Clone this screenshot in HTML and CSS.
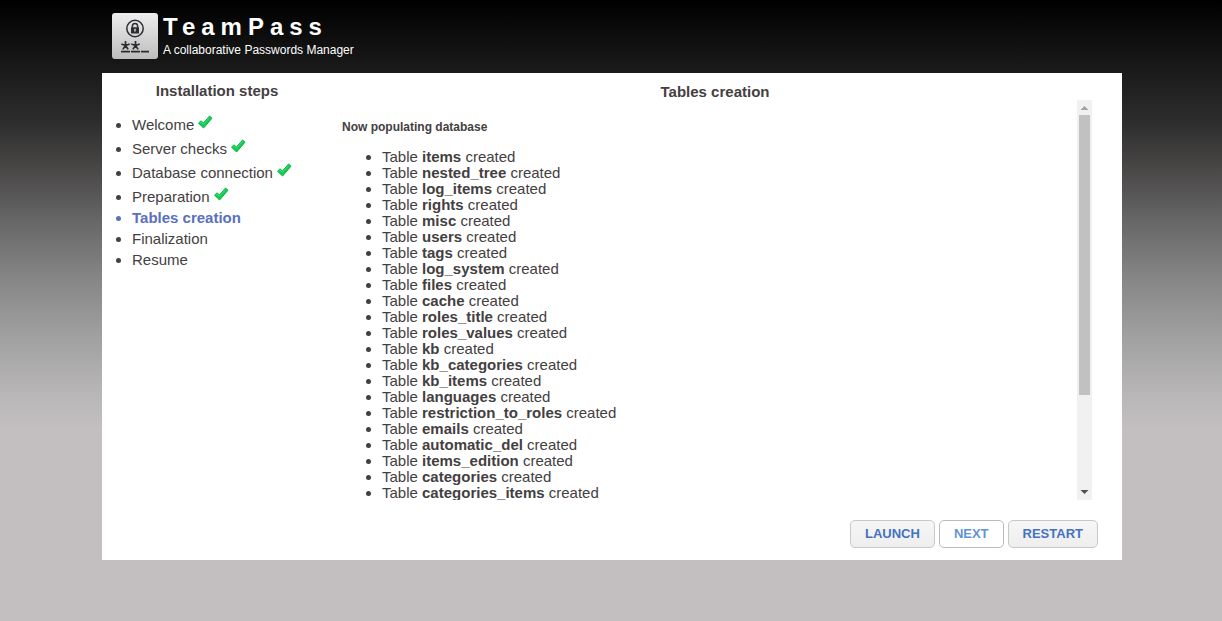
FILE: index.html
```html
<!DOCTYPE html>
<html lang="en">
<head>
    <meta charset="UTF-8">
    <meta name="viewport" content="width=device-width, initial-scale=1.0">
    <title>TeamPass Installation</title>
    <link rel="stylesheet" href="styles.css">
</head>
<body>
    <svg width="0" height="0" class="sprite">
        <symbol id="tick" viewBox="1 -1 16 16">
            <path d="M1.5 8.2L4 5.8L6.4 8L12.6 1L15 3.2L6.6 13Z" fill="#0fcb50" stroke="#0ab548" stroke-width="1" stroke-linejoin="round"/>
            <path d="M2.8 8L4 7L6.3 9.4L12.6 2.6" fill="none" stroke="#3fe07a" stroke-width="1"/>
        </symbol>
    </svg>
    <header class="top">
        <svg class="logo" viewBox="0 0 46 46">
            <defs>
                <linearGradient id="logoBg" x1="0" y1="0" x2="0" y2="1">
                    <stop offset="0" stop-color="#eeeeee"/>
                    <stop offset="1" stop-color="#bdbdbd"/>
                </linearGradient>
            </defs>
            <rect width="46" height="46" rx="3" fill="url(#logoBg)"/>
            <circle cx="23" cy="15.5" r="8.2" fill="none" stroke="#2e2c31" stroke-width="1.5"/>
            <path d="M20.4 14.5V13a2.6 2.6 0 0 1 5.2 0v1.5" fill="none" stroke="#2e2c31" stroke-width="1.5"/>
            <path d="M19 14.2h8v6.3h-8z" fill="#2e2c31"/>
            <path d="M23 15.8v2.8" stroke="#dddddd" stroke-width="1.4"/>
            <path d="M13.5 32.5V28M13.5 32.5L9.3 31M13.5 32.5L17.7 31M13.5 32.5L10.9 36.4M13.5 32.5L16.1 36.4" stroke="#2e2c31" stroke-width="1.7"/>
            <path d="M23.5 32.5V28M23.5 32.5L19.3 31M23.5 32.5L27.7 31M23.5 32.5L20.9 36.4M23.5 32.5L26.1 36.4" stroke="#2e2c31" stroke-width="1.7"/>
            <path d="M9 38.6h9M19 38.6h9M29 38.6h8" stroke="#2e2c31" stroke-width="1.6"/>
        </svg>
        <div class="brand">
            <div class="brand-name">TeamPass</div>
            <div class="brand-text">A collaborative Passwords Manager</div>
        </div>
    </header>
    <main class="box">
        <nav class="menu">
            <h3>Installation steps</h3>
            <ul>
                <li class="done">Welcome <svg class="tick"><use href="#tick"/></svg></li>
                <li class="done">Server checks <svg class="tick"><use href="#tick"/></svg></li>
                <li class="done">Database connection <svg class="tick"><use href="#tick"/></svg></li>
                <li class="done">Preparation <svg class="tick"><use href="#tick"/></svg></li>
                <li class="current">Tables creation</li>
                <li>Finalization</li>
                <li>Resume</li>
            </ul>
        </nav>
        <section class="step">
            <h3>Tables creation</h3>
            <div class="step-scroll">
                <div class="step-content">
                    <h4>Now populating database</h4>
                    <ul>
                        <li>Table <b>items</b> created</li>
                        <li>Table <b>nested_tree</b> created</li>
                        <li>Table <b>log_items</b> created</li>
                        <li>Table <b>rights</b> created</li>
                        <li>Table <b>misc</b> created</li>
                        <li>Table <b>users</b> created</li>
                        <li>Table <b>tags</b> created</li>
                        <li>Table <b>log_system</b> created</li>
                        <li>Table <b>files</b> created</li>
                        <li>Table <b>cache</b> created</li>
                        <li>Table <b>roles_title</b> created</li>
                        <li>Table <b>roles_values</b> created</li>
                        <li>Table <b>kb</b> created</li>
                        <li>Table <b>kb_categories</b> created</li>
                        <li>Table <b>kb_items</b> created</li>
                        <li>Table <b>languages</b> created</li>
                        <li>Table <b>restriction_to_roles</b> created</li>
                        <li>Table <b>emails</b> created</li>
                        <li>Table <b>automatic_del</b> created</li>
                        <li>Table <b>items_edition</b> created</li>
                        <li>Table <b>categories</b> created</li>
                        <li>Table <b>categories_items</b> created</li>
                    </ul>
                </div>
                <div class="scrollbar">
                    <svg class="arrow arrow-up" viewBox="0 0 15 15"><path d="M3.5 10L7.5 6L11.5 10Z"/></svg>
                    <div class="track">
                        <div class="thumb"></div>
                    </div>
                    <svg class="arrow" viewBox="0 0 15 15"><path d="M3.5 5L7.5 9L11.5 5Z"/></svg>
                </div>
            </div>
            <div class="buttons">
                <button type="button">LAUNCH</button>
                <button type="button" class="next">NEXT</button>
                <button type="button">RESTART</button>
            </div>
        </section>
    </main>
</body>
</html>
```

FILE: styles.css
```css
body {
    margin: 0;
    padding: 0 100px 0 102px;
    font-family: "Liberation Sans", Arial, sans-serif;
    font-size: 15px;
    color: #444041;
    background: #c3bfc0 linear-gradient(#000 0, #1b1b1b 73px, #2c2c2c 119px, #434040 158px, #656565 218px, #868585 277px, #a1a0a0 336px, #b9b7b8 396px, #c3bfc0 430px) no-repeat;
}
h3 {
    margin: 0;
    font-size: 15px;
    line-height: 17px;
    text-align: center;
}
ul {
    margin: 0;
}
.sprite {
    position: absolute;
}

.top {
    display: flex;
    gap: 5px;
    height: 60px;
    padding: 13px 10px 0;
    color: #fff;
}
.logo {
    width: 46px;
    height: 46px;
}
.brand-name {
    font-size: 24px;
    line-height: 28px;
    font-weight: bold;
    letter-spacing: 6px;
}
.brand-text {
    font-size: 12px;
    line-height: 18px;
}

.box {
    display: flex;
    background-color: #fff;
}
.menu {
    width: 230px;
    padding-top: 9px;
}
.menu ul {
    padding: 12px 0 0 30px;
    line-height: 21px;
}
.menu .done {
    padding-top: 3px;
    height: 21px;
}
.menu .current {
    color: #5a70bd;
    font-weight: bold;
}
.tick {
    width: 16px;
    height: 16px;
}

.step {
    flex: 1;
    padding: 10px 24px 12px 0;
}
.step-scroll {
    display: flex;
    height: 400px;
    padding: 0 6px 0 10px;
}
.step-content {
    flex: 1;
    overflow-y: auto;
    scrollbar-width: none;
}
.step-content h4 {
    margin: 0;
    padding: 20px 0 15px;
    font-size: 12px;
    line-height: 14px;
}
.step-content ul {
    line-height: 16px;
}

.scrollbar {
    display: flex;
    flex-direction: column;
    width: 15px;
    background-color: #f1f1f1;
}
.arrow {
    height: 15px;
    fill: #505050;
}
.arrow-up {
    fill: #a3a3a3;
}
.track {
    flex: 1;
    padding: 0 2px;
}
.thumb {
    height: 280px;
    background-color: #c1c1c1;
}

.buttons {
    display: flex;
    justify-content: flex-end;
    gap: 4px;
    padding-top: 20px;
}
button {
    height: 28px;
    padding: 0 14px 2px;
    border: 1px solid #c8c8c8;
    border-radius: 5px;
    background: linear-gradient(#f6f6f6, #eeeeee);
    color: #4472c0;
    font-family: inherit;
    font-size: 13px;
    font-weight: bold;
    cursor: pointer;
}
button.next {
    background: #fff;
    border-color: #bbb;
    color: #5f94d6;
}
button:hover {
    border-color: #999;
}
```
